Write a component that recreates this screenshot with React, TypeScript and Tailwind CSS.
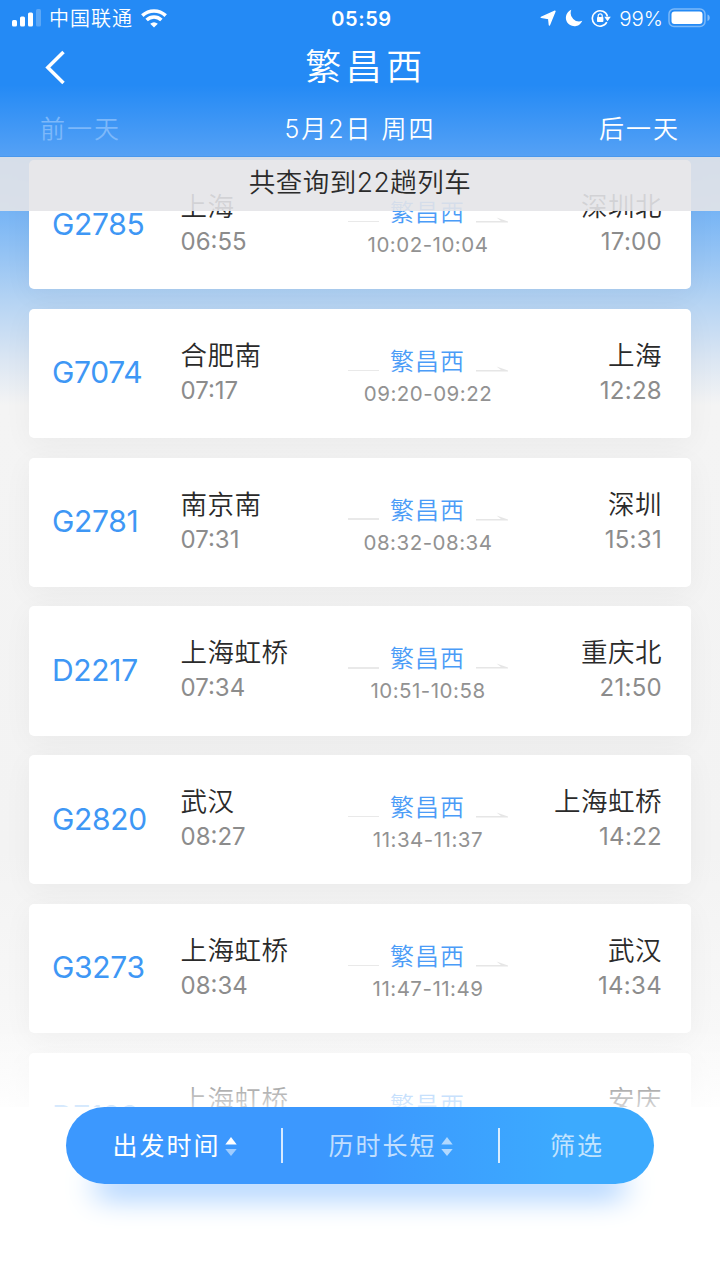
import React from 'react';

const trains = [
  { no: 'G2785', from: '上海', start: '06:55', stop: '10:02-10:04', to: '深圳北', end: '17:00' },
  { no: 'G7074', from: '合肥南', start: '07:17', stop: '09:20-09:22', to: '上海', end: '12:28' },
  { no: 'G2781', from: '南京南', start: '07:31', stop: '08:32-08:34', to: '深圳', end: '15:31' },
  { no: 'D2217', from: '上海虹桥', start: '07:34', stop: '10:51-10:58', to: '重庆北', end: '21:50' },
  { no: 'G2820', from: '武汉', start: '08:27', stop: '11:34-11:37', to: '上海虹桥', end: '14:22' },
  { no: 'G3273', from: '上海虹桥', start: '08:34', stop: '11:47-11:49', to: '武汉', end: '14:34' },
  { no: 'D7183', from: '上海虹桥', start: '08:39', stop: '11:54-11:56', to: '安庆', end: '13:26' },
];

function StatusBar() {
  return (
    <div className="flex h-9 items-center justify-between pl-3 pr-[9px] text-[20px] leading-9">
      <div className="flex w-[300px] items-center">
        <svg width="30" height="18" viewBox="0 0 30 18" fill="#fff">
          <rect x="0" y="11" width="5" height="6.5" rx="1.5" />
          <rect x="8" y="7.5" width="5" height="10" rx="1.5" />
          <rect x="16" y="3.5" width="5" height="14" rx="1.5" />
          <rect x="24" y="0" width="5" height="17.5" rx="1.5" opacity=".25" />
        </svg>
        <span className="ml-[7px] pt-[3px] leading-[33px] tracking-[1px]">中国联通</span>
        <svg className="ml-2" width="26" height="19" viewBox="0 0 26 19" fill="none" stroke="#fff" strokeWidth="3.6">
          <path d="M1.3 6.6C8 .4 18 .4 24.7 6.6" />
          <path d="M5.6 11C10 7 16 7 20.4 11" />
          <path d="M13 18.5 9.2 14.7Q13 11.7 16.8 14.7Z" fill="#fff" stroke="none" />
        </svg>
      </div>
      <span className="pt-px text-[20px] font-semibold tracking-[0.6px]">05:59</span>
      <div className="flex w-[300px] items-center justify-end">
        <svg width="17" height="17" viewBox="0 0 17 17" fill="#fff" stroke="#fff" strokeWidth="1.4" strokeLinejoin="round">
          <path d="M15 1.2 9.4 15 8.700 8.500 1.200 7.400Z" />
        </svg>
        <svg className="ml-[8px]" width="18" height="18" viewBox="0 0 18 18" fill="#fff">
          <path d="M6.3 .8A8.5 8.5 0 1 0 17.3 11.8A8.5 8.5 0 0 1 6.3 .8Z" />
        </svg>
        <svg className="ml-2" width="20" height="18" viewBox="0 0 20 18" fill="none">
          <path d="M15.8 13.2A7.7 7.7 0 1 1 16.5 7.5" stroke="#fff" strokeWidth="1.6" />
          <path d="M13.3 7.8H19.8L16.5 12.3Z" fill="#fff" />
          <rect x="6" y="8" width="6.4" height="5" rx=".8" fill="#fff" />
          <path d="M7.2 8.5V6.8A2 2 0 0 1 11.2 6.8V8.5" stroke="#fff" strokeWidth="1.2" />
        </svg>
        <span className="ml-2 pt-px text-[20.5px]">99%</span>
        <svg className="ml-[5px]" width="43" height="20" viewBox="0 0 43 20">
          <rect x="1" y="1" width="36" height="17.5" rx="5" fill="none" stroke="#fff" strokeOpacity=".4" strokeWidth="1.5" />
          <rect x="3.5" y="3.5" width="31" height="12.5" rx="3" fill="#fff" />
          <path d="M39.5 6.5C42.5 7.5 42.5 12 39.5 13Z" fill="#fff" fillOpacity=".45" />
        </svg>
      </div>
    </div>
  );
}

function TrainCard({ train }: { train: (typeof trains)[number] }) {
  return (
    <div className="grid h-[129.3px] shrink-0 grid-cols-[128px_167px_160px_1fr] rounded-[5px] bg-white pl-[23px] pr-[29px] shadow-[0_6px_30px_rgba(0,0,0,0.045)]">
      <div className="pt-[43.5px] text-[30px] leading-[40px] font-[370] tracking-[-0.3px] text-[#3e97f5]">{train.no}</div>
      <div className="ml-[0.5px] pt-[28px]">
        <div className="text-[26.5px] leading-[36px] tracking-[0.5px] whitespace-nowrap text-[#2a2a2a]">{train.from}</div>
        <div className="text-[24px] leading-[36px] font-[370] text-[#8c8c8c]">{train.start}</div>
      </div>
      <div className="-mr-px ml-px pt-[36px] text-center">
        <div className="flex items-center justify-between">
          <i className="mt-[17px] h-[1.5px] w-[31px] bg-[#e9e9e9]" />
          <span className="text-[24px] leading-[34px] tracking-[1px] text-[#4b9cf7]">繁昌西</span>
          <svg className="mt-[14px]" width="32" height="6" viewBox="0 0 32 6">
            <path d="M0 4H25L20.5 .5 32 4.500V5.500H0Z" fill="#e6e6e6" />
          </svg>
        </div>
        <div className="text-[20.5px] leading-[29px] font-[370] tracking-[0.5px] text-[#929292]">{train.stop}</div>
      </div>
      <div className="pt-[28px] text-right">
        <div className="text-[26.5px] leading-[36px] tracking-[0.5px] whitespace-nowrap text-[#2a2a2a]">{train.to}</div>
        <div className="text-[24px] leading-[36px] font-[370] tracking-[0.3px] text-[#8c8c8c]">{train.end}</div>
      </div>
    </div>
  );
}

function SortArrows({ active }: { active?: boolean }) {
  return (
    <svg className="ml-1" width="12" height="20" viewBox="0 0 12 20" fill="#fff">
      <path d="M6 0 11.7 7.5H.3Z" opacity={active ? 1 : 0.6} />
      <path d="M6 19 11.7 12H.3Z" opacity={active ? 0.5 : 0.6} />
    </svg>
  );
}

export default function App() {
  return (
    <div className="flex h-[1280px] w-[720px] flex-col overflow-hidden bg-white font-['Inter','Noto_Sans_CJK_SC',sans-serif] font-[350]">
      <div className="flex h-[1107px] shrink-0 flex-col bg-[linear-gradient(180deg,#248af5_0px,#248af5_85px,#55a1f5_156px,#76b4f5_210px,#b4d3f3_300px,#dbe6f3_360px,#f4f4f4_405px,#f3f3f3_850px,#fafafa_1107px)]">
        <header className="h-[157px] shrink-0 border-b border-[#4a98ed] text-white">
          <StatusBar />
          <div className="grid h-[62px] grid-cols-[1fr_auto_1fr] items-center px-[44px]">
            <svg width="24" height="36" viewBox="0 0 24 36" fill="none" stroke="#fff" strokeWidth="3.5">
              <path d="M19.5 3 3.8 18.5 19.5 34" />
            </svg>
            <h1 className="ml-[12px] text-[36px] leading-[60px] tracking-[4.5px]">繁昌西</h1>
          </div>
          <div className="grid grid-cols-[1fr_auto_1fr] items-center px-[40px] pt-[2px] text-[25px] leading-[58px] tracking-[2px]">
            <span className="text-[#7db8fa]">前一天</span>
            <span>5月2日 周四</span>
            <span className="text-right">后一天</span>
          </div>
        </header>
        <main className="relative min-h-0 flex-1 overflow-hidden">
          <div className="flex flex-col gap-[19.5px] px-[29px] pt-[3px]">
            {trains.map((train) => (
              <TrainCard key={train.no} train={train} />
            ))}
          </div>
          <div className="absolute inset-x-0 top-0 h-[53.5px] bg-[#e4e4e8]/90 text-center text-[26.5px] leading-[51px] tracking-[0.5px] text-[#2b2b2b]">
            共查询到22趟列车
          </div>
          <div className="absolute inset-x-0 bottom-0 h-[80px] bg-linear-to-b from-white/0 to-white/80" />
        </main>
      </div>
      <nav className="ml-[66px] flex h-[77px] w-[588px] shrink-0 items-center rounded-full bg-linear-to-r from-[#3c98fe] from-50% to-[#3caafe] to-85% text-[25px] font-normal tracking-[2px] text-white/70 shadow-[0_40px_30px_-28px_#8fc2ff]">
        <button className="flex w-[215px] items-center justify-center pt-0.5 pl-0.5 text-white">
          出发时间
          <SortArrows active />
        </button>
        <i className="h-[35px] w-[2px] bg-white/80" />
        <button className="flex w-[215px] items-center justify-center pt-0.5">
          历时长短
          <SortArrows />
        </button>
        <i className="h-[35px] w-[2px] bg-white/80" />
        <button className="flex-1 pt-0.5">筛选</button>
      </nav>
    </div>
  );
}
